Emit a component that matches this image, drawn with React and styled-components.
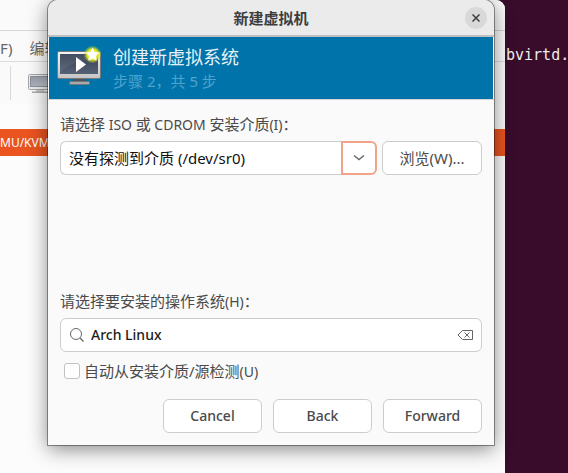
import React from "react";
import styled, { createGlobalStyle, css } from "styled-components";

const GlobalStyle = createGlobalStyle`
  *, *::before, *::after { box-sizing: border-box; }
  body {
    margin: 0;
    background: #380c2a;
    font-family: "Noto Sans", "Noto Sans CJK SC", sans-serif;
    font-size: 15px;
    line-height: 22px;
    color: #4a4a4a;
  }
  button, input { font: inherit; color: inherit; }
`;

const Desktop = styled.main`
  position: relative;
  display: grid;
  grid-template-columns: minmax(0, 1fr) 63px;
  min-height: 100vh;
  overflow: hidden;
`;

const ManagerWindow = styled.section`
  background: #fcfcfc;
  border-top-right-radius: 9px;
  overflow: hidden;
`;

const ManagerTitle = styled.header`
  height: 31px;
  background: #fafafa;
  border-bottom: 1px solid #d6d6d6;
`;

const MenuBar = styled.nav`
  display: flex;
  align-items: center;
  gap: 17px;
  height: 31px;
  padding-top: 4px;
  background: #fafafa;
  border-bottom: 1px solid #dcdcdc;
  white-space: nowrap;
`;

const MenuItem = styled.button`
  flex: none;
  padding: 0;
  border: 0;
  background: none;
  color: #666;
`;

const ToolBar = styled.div`
  display: flex;
  align-items: center;
  gap: 17px;
  height: 42px;
  padding-left: 10px;
  background: #fafafa;
`;

const Separator = styled.span`
  width: 1px;
  height: 34px;
  background: #d8d8d8;
`;

const ToolButton = styled.button`
  display: flex;
  padding: 2px 0 0;
  border: 0;
  background: none;
`;

const Connection = styled.div`
  height: 27px;
  margin-top: 25px;
  background: #e95420;
  color: #fff;
  font-size: 12px;
  line-height: 27px;
  white-space: nowrap;
`;

const Terminal = styled.section`
  padding: 44px 0 0 1px;
  overflow: hidden;
  background: #380c2a;
  color: #eeeeec;
  font-family: "DejaVu Sans Mono", monospace;
  white-space: nowrap;
`;

const Dialog = styled.section`
  position: absolute;
  top: 0;
  left: 48px;
  right: 74px;
  background: #fafafa;
  border-radius: 10px 10px 0 0;
  box-shadow: 0 0 0 1px rgba(0, 0, 0, 0.38), 0 4px 20px rgba(0, 0, 0, 0.48);
`;

const TitleBar = styled.header`
  display: grid;
  grid-template-columns: 22px 1fr 22px;
  align-items: center;
  height: 37px;
  padding: 0 7px;
  background: #ebebeb;
  border-bottom: 2px solid #bfbfbf;
  border-radius: 10px 10px 0 0;
`;

const Title = styled.h1`
  grid-column: 2;
  margin: 0;
  color: #3d3d3d;
  font-size: 15px;
  font-weight: 700;
  line-height: 22px;
  text-align: center;
`;

const CloseButton = styled.button`
  display: grid;
  place-items: center;
  width: 22px;
  height: 22px;
  padding: 0;
  border: 0;
  border-radius: 50%;
  background: #d9d9d9;
`;

const Banner = styled.div`
  display: flex;
  align-items: center;
  gap: 9px;
  height: 62px;
  margin: 0 1px;
  padding: 0 8px 0 7px;
  background: #0073aa;
`;

const BannerTitle = styled.h2`
  margin: 0;
  color: #e6f1f7;
  font-size: 18px;
  font-weight: 400;
  line-height: 24px;
`;

const BannerStep = styled.p`
  margin: 0;
  color: #4fa3cf;
  line-height: 24px;
`;

const BannerText = styled.div`
  padding-top: 2px;
`;

const Form = styled.form`
  padding: 13px 12px 12px;
  border-top: 1px solid #d4d4d4;
`;

const FieldLabel = styled.label`
  display: block;
  margin-bottom: 6px;
`;

const Latin = styled.span`
  font-size: 14px;
  line-height: 1;
`;

const MediaRow = styled.div`
  display: grid;
  grid-template-columns: minmax(0, 1fr) 100px;
  gap: 5px;
  margin-bottom: 115px;
`;

const boxed = css`
  height: 34px;
  border: 1px solid #cdcdcd;
  border-radius: 6px;
  background: #fff;
`;

const Combo = styled.div`
  display: flex;
`;

const ComboInput = styled.input`
  ${boxed}
  flex: 1;
  min-width: 0;
  padding: 0 8px 2px;
  border-right: 0;
  border-radius: 6px 0 0 6px;
  color: #111;
`;

const ComboToggle = styled.button`
  ${boxed}
  display: grid;
  place-items: center;
  width: 36px;
  padding: 0;
  border: 2px solid #f0a388;
  border-radius: 0 6px 6px 0;
`;

const PushButton = styled.button`
  ${boxed}
  padding: 0 8px;
  font-size: ${(p) => (p.$latin ? "14px" : "15px")};
  font-weight: ${(p) => (p.$latin ? 500 : 400)};
`;

const SearchBox = styled.div`
  ${boxed}
  display: flex;
  align-items: center;
  gap: 6px;
  padding: 0 7px 0 8px;
`;

const SearchInput = styled.input`
  flex: 1;
  min-width: 0;
  padding: 0;
  border: 0;
  outline: 0;
  background: none;
  color: #1c1c1c;
  font-size: 14px;
  font-weight: 500;
`;

const ClearButton = styled.button`
  display: flex;
  padding: 0;
  border: 0;
  background: none;
`;

const CheckLabel = styled.label`
  display: flex;
  align-items: center;
  gap: 4px;
  margin-top: 8px;
  padding-left: 4px;
`;

const CheckBox = styled.input`
  appearance: none;
  width: 16px;
  height: 16px;
  margin: 0;
  border: 1px solid #c2c2c2;
  border-radius: 3px;
  background: #fff;
  &:checked { background: #e95420; }
`;

const Actions = styled.footer`
  display: flex;
  justify-content: flex-end;
  gap: 11px;
  margin-top: 17px;

  ${PushButton} { width: 99px; }
`;

function MonitorIcon() {
  return (
    <svg width="24" height="20" viewBox="0 0 24 20" aria-hidden="true">
      <defs>
        <linearGradient id="smallScreen" x1="0" y1="0" x2="1" y2="1">
          <stop offset="0" stopColor="#9299a6" />
          <stop offset="1" stopColor="#c3c8d0" />
        </linearGradient>
      </defs>
      <rect x="0.5" y="0.5" width="23" height="15" rx="1" fill="#ececec" stroke="#a6a6a6" />
      <rect x="2.5" y="2.5" width="19" height="10" fill="url(#smallScreen)" stroke="#8a919c" />
      <path d="M8 16h8v2H8z" fill="#c6c6c6" />
      <path d="M4 17.500h16v1.500H4z" fill="#aaa" />
    </svg>
  );
}

function NewMachineIcon() {
  return (
    <svg width="48" height="44" viewBox="0 0 48 44" aria-hidden="true">
      <defs>
        <linearGradient id="screen" x1="0" y1="0" x2="0" y2="1">
          <stop offset="0" stopColor="#343f52" />
          <stop offset="1" stopColor="#566176" />
        </linearGradient>
        <linearGradient id="frame" x1="0" y1="0" x2="0" y2="1">
          <stop offset="0" stopColor="#f6f6f6" />
          <stop offset="1" stopColor="#c4c4c4" />
        </linearGradient>
        <radialGradient id="glow">
          <stop offset="0" stopColor="#f8f67a" />
          <stop offset="0.6" stopColor="#e2e61c" />
          <stop offset="1" stopColor="#b9d12c" stopOpacity="0" />
        </radialGradient>
      </defs>
      <path d="M17 33h13v5H17z" fill="#4c535a" />
      <rect x="13.500" y="35.500" width="20" height="3" rx="1" fill="#a9a9a9" stroke="#71777b" />
      <rect x="1.500" y="5.500" width="43" height="27" rx="1.500" fill="url(#frame)" stroke="#77797c" />
      <rect x="4" y="8" width="38" height="20" fill="url(#screen)" />
      <path d="M4 8h38v4Q20 13 4 26z" fill="#fff" opacity="0.07" />
      <path d="M20 11v15l10-7.500z" fill="#fff" />
      <circle cx="36.500" cy="8.500" r="9" fill="url(#glow)" />
      <path
        d="M36.500 2.500l1.800 3.900 4.200.5-3.100 3 .8 4.200-3.700-2-3.700 2 .8-4.200-3.100-3 4.200-.5z"
        fill="#fff"
        stroke="#fff"
        strokeLinejoin="round"
      />
    </svg>
  );
}

export default function App() {
  return (
    <>
      <GlobalStyle />
      <Desktop>
        <ManagerWindow>
          <ManagerTitle />
          <MenuBar>
            <MenuItem>F)</MenuItem>
            <MenuItem>编辑</MenuItem>
          </MenuBar>
          <ToolBar>
            <Separator />
            <ToolButton aria-label="新建">
              <MonitorIcon />
            </ToolButton>
          </ToolBar>
          <Connection>MU/KVM</Connection>
        </ManagerWindow>
        <Terminal>bvirtd.</Terminal>

        <Dialog role="dialog" aria-labelledby="dialog-title">
          <TitleBar>
            <Title id="dialog-title">新建虚拟机</Title>
            <CloseButton aria-label="关闭">
              <svg width="8" height="8" viewBox="0 0 8 8" aria-hidden="true">
                <path d="M.5.5l7 7M7.500.5l-7 7" stroke="#3d3d3d" strokeWidth="1.500" />
              </svg>
            </CloseButton>
          </TitleBar>
          <Banner>
            <NewMachineIcon />
            <BannerText>
              <BannerTitle>创建新虚拟系统</BannerTitle>
              <BannerStep>步骤 2，共 5 步</BannerStep>
            </BannerText>
          </Banner>
          <Form onSubmit={(e) => e.preventDefault()}>
            <FieldLabel htmlFor="media">
              请选择<Latin> ISO </Latin>或<Latin> CDROM </Latin>安装介质<Latin>(I)</Latin>：
            </FieldLabel>
            <MediaRow>
              <Combo>
                <ComboInput id="media" defaultValue="没有探测到介质 (/dev/sr0)" />
                <ComboToggle type="button" aria-label="展开列表">
                  <svg width="12" height="8" viewBox="0 0 12 8" aria-hidden="true">
                    <path d="M1 1.500l5 4 5-4" fill="none" stroke="#6b6b6b" strokeWidth="1.500" />
                  </svg>
                </ComboToggle>
              </Combo>
              <PushButton type="button">浏览(W)...</PushButton>
            </MediaRow>

            <FieldLabel htmlFor="os">
              请选择要安装的操作系统<Latin>(H)</Latin>：
            </FieldLabel>
            <SearchBox>
              <svg width="16" height="16" viewBox="0 0 16 16" aria-hidden="true">
                <circle cx="7" cy="7" r="5.500" fill="none" stroke="#666" />
                <path d="M11 11l3.500 3.500" stroke="#666" strokeWidth="1.300" />
              </svg>
              <SearchInput id="os" defaultValue="Arch Linux" />
              <ClearButton type="button" aria-label="清除">
                <svg width="17" height="12" viewBox="0 0 17 12" aria-hidden="true">
                  <path d="M5.500 1.500h10v9h-10L1 6z" fill="none" stroke="#666" />
                  <path d="M7.500 3.500l5 5M12.500 3.500l-5 5" stroke="#666" />
                </svg>
              </ClearButton>
            </SearchBox>
            <CheckLabel>
              <CheckBox type="checkbox" />
              <span>
                自动从安装介质/源检测<Latin>(U)</Latin>
              </span>
            </CheckLabel>
            <Actions>
              <PushButton type="button" $latin>Cancel</PushButton>
              <PushButton type="button" $latin>Back</PushButton>
              <PushButton type="submit" $latin>Forward</PushButton>
            </Actions>
          </Form>
        </Dialog>
      </Desktop>
    </>
  );
}
